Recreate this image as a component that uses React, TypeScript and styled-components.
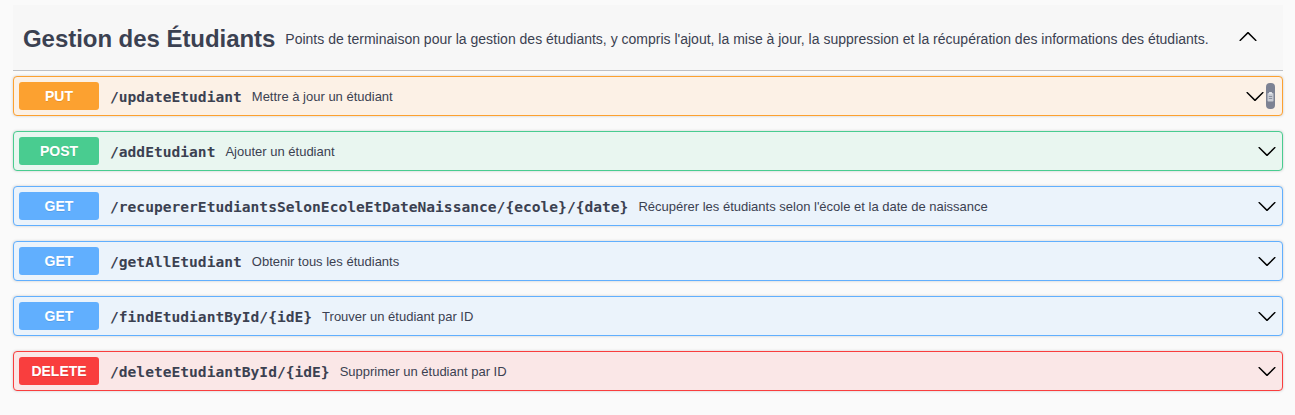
import React from "react";
import styled, { createGlobalStyle } from "styled-components";

const Global = createGlobalStyle`
  html, body { margin: 0; padding: 0; background: #fafafa; }
  body { font-family: "Liberation Sans", Arial, sans-serif; color: #3b4151; }
  * { box-sizing: border-box; }
`;

const Page = styled.div`
  padding: 5px 12px 24px 13px;
  background: #fafafa;
  min-height: 415px;
`;

const TagHeader = styled.div`
  display: flex;
  align-items: center;
  height: 66px;
  padding: 2px 20px 0 10px;
  background: #f7f7f7;
  border-bottom: 1px solid rgba(59, 65, 81, 0.3);
  margin-bottom: 5px;
`;

const Title = styled.h3`
  margin: 0;
  font-size: 24px;
  font-weight: 700;
  color: #3b4151;
  white-space: nowrap;
  letter-spacing: -0.05px;
`;

const TagDesc = styled.small`
  flex: 1;
  padding: 0 10px;
  font-size: 14px;
  font-weight: 400;
  color: #3b4151;
  white-space: nowrap;
`;

const ExpandBtn = styled.div`
  display: flex;
  align-items: center;
  width: 20px;
  height: 20px;
  margin-right: 5px;
  margin-top: -4px;
`;

const Block = styled.div<{ $border: string; $bg: string }>`
  display: flex;
  align-items: center;
  height: 40px;
  padding: 5px;
  margin-bottom: 15px;
  border: 1px solid ${(p) => p.$border};
  background: ${(p) => p.$bg};
  border-radius: 4px;
  box-shadow: 0 0 3px rgba(0, 0, 0, 0.19);
`;

const Method = styled.span<{ $color: string }>`
  flex: none;
  min-width: 80px;
  height: 28px;
  line-height: 28px;
  text-align: center;
  background: ${(p) => p.$color};
  border-radius: 3px;
  color: #fff;
  font-size: 14px;
  font-weight: 700;
  text-shadow: 0 1px 0 rgba(0, 0, 0, 0.1);
`;

const Path = styled.span`
  padding: 1px 10px 0 11px;
  font-family: "DejaVu Sans Mono", "Liberation Mono", monospace;
  font-size: 14.6px;
  font-weight: 700;
  color: #3b4151;
  white-space: nowrap;
`;

const Desc = styled.span`
  flex: 1;
  font-size: 13px;
  color: #3b4151;
  white-space: nowrap;
`;

const Arrow = styled.svg`
  flex: none;
  width: 20px;
  height: 20px;
`;

const CopyBtn = styled.div`
  flex: none;
  width: 9px;
  height: 26px;
  margin: 0 2px 0 1px;
  border-radius: 4px;
  background: #7d8293;
  display: flex;
  align-items: center;
  justify-content: center;
  overflow: hidden;
`;

const arrowPath =
  "M17.418 6.109c.272-.268.709-.268.979 0s.271.701 0 .969l-7.908 7.83c-.27.268-.707.268-.979 0l-7.908-7.83c-.27-.268-.27-.701 0-.969.271-.268.709-.268.979 0L10 13.25l7.418-7.141z";

const Chevron = ({ up }: { up?: boolean }) => (
  <Arrow viewBox="0 0 20 20" style={up ? { transform: "rotate(180deg)" } : undefined}>
    <path d={arrowPath} fill="#000" />
  </Arrow>
);

type Op = { method: string; path: string; desc: string; copy?: boolean };

const colors: Record<string, { c: string; bg: string }> = {
  PUT: { c: "#fca130", bg: "#fcf1e6" },
  POST: { c: "#49cc90", bg: "#e9f6f0" },
  GET: { c: "#61affe", bg: "#ebf3fb" },
  DELETE: { c: "#f93e3e", bg: "#fae7e7" },
};

const ops: Op[] = [
  { method: "PUT", path: "/updateEtudiant", desc: "Mettre à jour un étudiant", copy: true },
  { method: "POST", path: "/addEtudiant", desc: "Ajouter un étudiant" },
  {
    method: "GET",
    path: "/recupererEtudiantsSelonEcoleEtDateNaissance/{ecole}/{date}",
    desc: "Récupérer les étudiants selon l'école et la date de naissance",
  },
  { method: "GET", path: "/getAllEtudiant", desc: "Obtenir tous les étudiants" },
  { method: "GET", path: "/findEtudiantById/{idE}", desc: "Trouver un étudiant par ID" },
  { method: "DELETE", path: "/deleteEtudiantById/{idE}", desc: "Supprimer un étudiant par ID" },
];

export default function App() {
  return (
    <>
      <Global />
      <Page>
        <TagHeader>
          <Title>Gestion des Étudiants</Title>
          <TagDesc>
            Points de terminaison pour la gestion des étudiants, y compris l'ajout, la mise à jour, la
            suppression et la récupération des informations des étudiants.
          </TagDesc>
          <ExpandBtn>
            <Chevron up />
          </ExpandBtn>
        </TagHeader>
        {ops.map((op, i) => (
          <Block key={i} $border={colors[op.method].c} $bg={colors[op.method].bg}>
            <Method $color={colors[op.method].c}>{op.method}</Method>
            <Path>{op.path}</Path>
            <Desc>{op.desc}</Desc>
            <Chevron />
            {op.copy && (
              <CopyBtn>
                <svg width="7" height="11" viewBox="0 0 7 11">
                  <rect x="0.5" y="2" width="6" height="8.5" rx="0.8" fill="#c9ccd4" />
                  <rect x="2" y="1" width="3" height="2" rx="0.5" fill="#e3e5ea" />
                  <rect x="1.8" y="5" width="3.4" height="0.8" fill="#7d8293" />
                  <rect x="1.8" y="7" width="3.4" height="0.8" fill="#7d8293" />
                </svg>
              </CopyBtn>
            )}
          </Block>
        ))}
      </Page>
    </>
  );
}
